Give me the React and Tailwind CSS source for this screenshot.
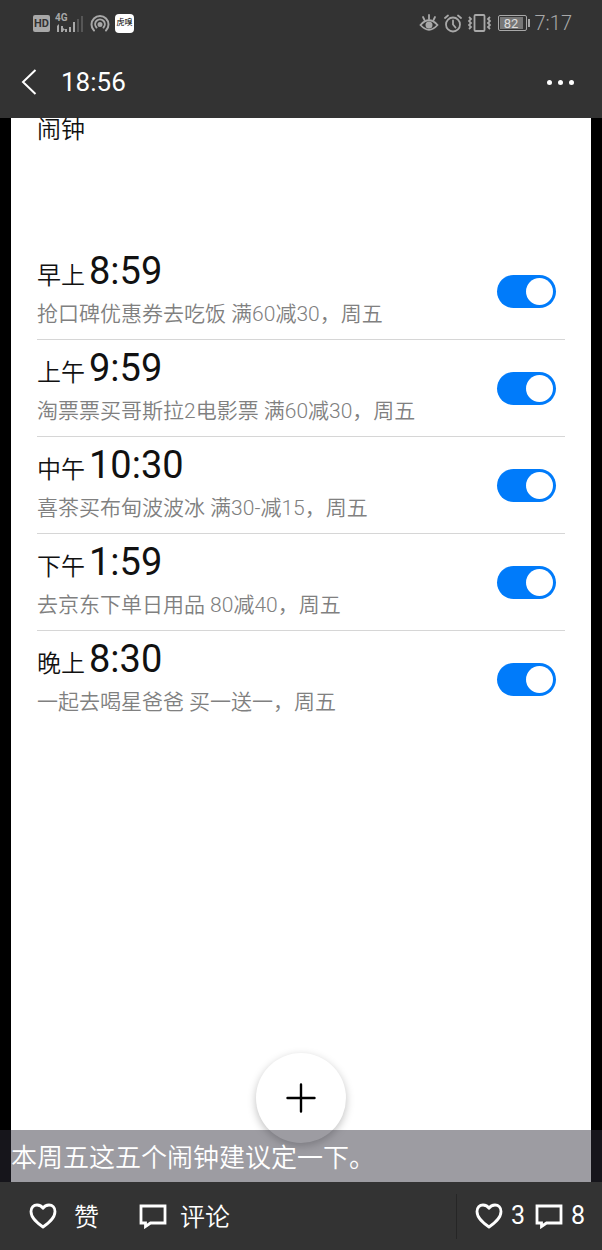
const alarms = [
  { period: "早上", time: "8:59", note: "抢口碑优惠券去吃饭 满60减30，周五" },
  { period: "上午", time: "9:59", note: "淘票票买哥斯拉2电影票 满60减30，周五" },
  { period: "中午", time: "10:30", note: "喜茶买布甸波波冰 满30-减15，周五" },
  { period: "下午", time: "1:59", note: "去京东下单日用品 80减40，周五" },
  { period: "晚上", time: "8:30", note: "一起去喝星爸爸 买一送一，周五" },
];

function StatusBar() {
  return (
    <div className="flex h-[46px] items-center justify-between pr-[30px] pl-[33px] text-[#a8a8a8]">
      <div className="flex items-center">
        <span className="flex h-[17px] w-[17px] items-center justify-center rounded-[2px] bg-[#a8a8a8] text-[11px] leading-none font-bold text-[#333333]">
          HD
        </span>
        <svg className="ml-[5px]" width="29" height="20" viewBox="0 0 29 20" fill="currentColor" aria-hidden="true">
          <text x="0" y="8" fontSize="10" fontWeight="700" fontFamily="Roboto, sans-serif">4G</text>
          <path d="M2 13l2-2v8H2zM6 13h2v2l2 1.5L8 18v1H6zM10 16h2v3h-2zM14 14h2v5h-2zM18 9h2v10h-2z" />
          <path d="M22 6h2v13h-2zM26 3h2v16h-2z" opacity="0.3" />
        </svg>
        <svg className="ml-[6px]" width="20" height="19" viewBox="0 0 20 19" fill="none" stroke="currentColor" strokeWidth="2" strokeLinecap="round" aria-hidden="true">
          <path d="M4 16.500A8.500 8.500 0 1 1 16 16.500" />
          <path d="M6.500 13.500A4.800 4.800 0 1 1 13.500 13.500" />
          <circle cx="10" cy="10.500" r="1.500" fill="currentColor" />
        </svg>
        <span className="ml-[5px] flex h-[19px] w-[19px] items-center justify-center rounded-[4px] bg-white text-[8px] leading-none font-normal whitespace-nowrap text-black">
          虎嗅
        </span>
      </div>
      <div className="flex items-center">
        <svg width="20" height="18" viewBox="0 0 20 18" fill="none" stroke="currentColor" strokeWidth="1.800" strokeLinecap="round" aria-hidden="true">
          <path d="M1.500 11Q10 1.500 18.500 11 10 20.500 1.500 11z" />
          <circle cx="10" cy="11" r="2.600" fill="currentColor" />
          <path d="M10 1v4M4 3l1.500 3M16 3l-1.500 3" />
        </svg>
        <svg className="ml-[5px]" width="18" height="19" viewBox="0 0 18 19" fill="none" stroke="currentColor" strokeWidth="1.800" strokeLinecap="round" aria-hidden="true">
          <circle cx="9" cy="10.500" r="7" />
          <path d="M9 6.500v4l2.500 3M1 4l3-2.500M17 4l-3-2.500" />
        </svg>
        <svg className="ml-[6px]" width="23" height="18" viewBox="0 0 23 18" fill="none" stroke="currentColor" strokeWidth="1.800" aria-hidden="true">
          <rect x="6.500" y="1" width="10" height="16" rx="1" />
          <path d="M1 3l2 2-2 2 2 2-2 2 2 2-2 2M22 3l-2 2 2 2-2 2 2 2-2 2 2 2" />
        </svg>
        <span className="ml-[7px] flex h-[16px] w-[29px] items-center rounded-[2px] border border-[#a8a8a8] p-[1px]">
          <span className="flex h-full w-[23px] items-center justify-center bg-[#777777] text-[13px] leading-none font-normal text-[#dddddd]">
            82
          </span>
        </span>
        <span className="ml-[1px] h-[8px] w-[2px] bg-[#a8a8a8]" />
        <span className="ml-[5px] text-[20px] leading-[20px]">7:17</span>
      </div>
    </div>
  );
}

function Heart() {
  return (
    <svg width="28" height="26" viewBox="0 0 28 26" fill="none" stroke="currentColor" strokeWidth="2.800" strokeLinejoin="round" aria-hidden="true">
      <path d="M14 24C9 20.500 2 15.500 2 8.500 2 4.500 4.500 2 8 2c2.800 0 4.800 1.200 6 3.200C15.200 3.200 17.200 2 20 2c3.500 0 6 2.500 6 6.500C26 15.500 19 20.500 14 24z" />
    </svg>
  );
}

function Bubble() {
  return (
    <svg width="28" height="25" viewBox="0 0 28 25" fill="none" stroke="currentColor" strokeWidth="2.800" strokeLinejoin="miter" aria-hidden="true">
      <path d="M2 2h24v17H11.500L6.500 22.500V19H2z" />
    </svg>
  );
}

function AlarmRow({ period, time, note }) {
  const id = `alarm-${time}`;
  return (
    <li className="flex h-[97px] items-center justify-between border-b border-[#d6d6d6] pr-[9px] last:border-transparent">
      <label htmlFor={id} className="flex flex-col pb-[3px]">
        <span className="flex items-baseline gap-[4px] text-[#111111]">
          <span className="text-[24px] leading-[40px]">{period}</span>
          <span className="text-[38px] leading-[40px] font-normal">{time}</span>
        </span>
        <span className="mt-[3px] text-[21px] leading-[30px] whitespace-nowrap text-[#808080]">{note}</span>
      </label>
      <input
        id={id}
        type="checkbox"
        role="switch"
        defaultChecked
        className="flex h-[33px] w-[59px] shrink-0 appearance-none items-center rounded-full bg-[#c8c8c8] px-[3px] before:h-[27px] before:w-[27px] before:rounded-full before:bg-white checked:justify-end checked:bg-[#007bfa]"
      />
    </li>
  );
}

export default function App() {
  return (
    <div className="flex min-h-screen flex-col bg-black font-[Roboto,'Noto_Sans_CJK_SC',sans-serif] font-[350]">
      <header className="bg-[#333333]">
        <StatusBar />
        <div className="flex h-[72px] items-center justify-between pr-[28px] pl-[20px] text-white">
          <div className="flex items-center gap-[22px]">
            <button type="button" aria-label="返回">
              <svg width="19" height="26" viewBox="0 0 19 26" fill="none" stroke="currentColor" strokeWidth="2" aria-hidden="true">
                <path d="M15.500 1L3 13l12.500 12" />
              </svg>
            </button>
            <h1 className="text-[26px] leading-[32px] font-normal">18:56</h1>
          </div>
          <button type="button" aria-label="更多" className="flex gap-[6px]">
            <span className="h-[5px] w-[5px] rounded-full bg-white" />
            <span className="h-[5px] w-[5px] rounded-full bg-white" />
            <span className="h-[5px] w-[5px] rounded-full bg-white" />
          </button>
        </div>
      </header>

      <main className="relative flex flex-1 flex-col px-[11px]">
        <div className="flex-1 bg-white px-[26px] pb-[180px]">
          <h2 className="h-[125px] text-[24px] leading-[24px] font-[350] text-[#111111]">闹钟</h2>
          <ul>
            {alarms.map((alarm) => (
              <AlarmRow key={alarm.time} {...alarm} />
            ))}
          </ul>
        </div>
        <button
          type="button"
          aria-label="添加闹钟"
          className="absolute bottom-[39px] left-1/2 flex h-[90px] w-[90px] -translate-x-1/2 items-center justify-center rounded-full bg-white text-black shadow-[0_3px_8px_rgba(0,0,0,0.25)]"
        >
          <svg width="30" height="30" viewBox="0 0 30 30" fill="none" stroke="currentColor" strokeWidth="2.400" strokeLinecap="round" aria-hidden="true">
            <path d="M15 1.500v27M1.500 15h27" />
          </svg>
        </button>
        <p className="absolute inset-x-0 bottom-0 h-[52px] bg-[#2f2d3a]/47 px-[11px] text-[26px] leading-[56px] text-white">
          本周五这五个闹钟建议定一下。
        </p>
      </main>

      <footer className="flex h-[68px] items-center justify-between bg-[#333333] pr-[17px] pl-[29px] text-[25px] text-white">
        <div className="flex items-center gap-[40px]">
          <button type="button" className="flex items-center gap-[17px]">
            <Heart />
            <span className="pt-[4px]">赞</span>
          </button>
          <button type="button" className="flex items-center gap-[13px]">
            <Bubble />
            <span className="pt-[4px]">评论</span>
          </button>
        </div>
        <div className="flex h-[45px] items-center gap-[10px] border-l border-[#262626] pl-[18px] font-normal">
          <span className="flex items-center gap-[8px]">
            <Heart />3
          </span>
          <span className="flex items-center gap-[8px]">
            <Bubble />8
          </span>
        </div>
      </footer>
    </div>
  );
}
